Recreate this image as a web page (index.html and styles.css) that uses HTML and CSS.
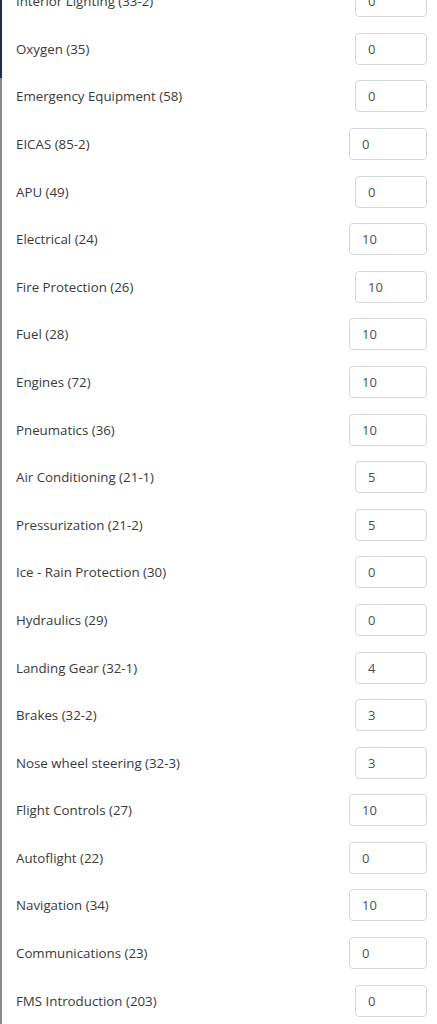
FILE: index.html
```html
<!DOCTYPE html>
<html>
<head>
<meta charset="utf-8">
<link rel="stylesheet" href="styles.css">
</head>
<body>
<div class="page">
  <div class="edge"><div class="edge-top"></div><div class="edge-rest"></div></div>
  <div class="list">
    <div class="row"><span class="label">Interior Lighting (33-2)</span><input class="num" value="0"></div>
    <div class="row"><span class="label">Oxygen (35)</span><input class="num" value="0"></div>
    <div class="row"><span class="label">Emergency Equipment (58)</span><input class="num" value="0"></div>
    <div class="row"><span class="label">EICAS (85-2)</span><input class="num wide" value="0"></div>
    <div class="row"><span class="label">APU (49)</span><input class="num" value="0"></div>
    <div class="row"><span class="label">Electrical (24)</span><input class="num wide" value="10"></div>
    <div class="row"><span class="label">Fire Protection (26)</span><input class="num" value="10"></div>
    <div class="row"><span class="label">Fuel (28)</span><input class="num wide" value="10"></div>
    <div class="row"><span class="label">Engines (72)</span><input class="num wide" value="10"></div>
    <div class="row"><span class="label">Pneumatics (36)</span><input class="num wide" value="10"></div>
    <div class="row"><span class="label">Air Conditioning (21-1)</span><input class="num" value="5"></div>
    <div class="row"><span class="label">Pressurization (21-2)</span><input class="num" value="5"></div>
    <div class="row"><span class="label">Ice - Rain Protection (30)</span><input class="num" value="0"></div>
    <div class="row"><span class="label">Hydraulics (29)</span><input class="num" value="0"></div>
    <div class="row"><span class="label">Landing Gear (32-1)</span><input class="num" value="4"></div>
    <div class="row"><span class="label">Brakes (32-2)</span><input class="num" value="3"></div>
    <div class="row"><span class="label">Nose wheel steering (32-3)</span><input class="num" value="3"></div>
    <div class="row"><span class="label">Flight Controls (27)</span><input class="num wide" value="10"></div>
    <div class="row"><span class="label">Autoflight (22)</span><input class="num wide" value="0"></div>
    <div class="row"><span class="label">Navigation (34)</span><input class="num wide" value="10"></div>
    <div class="row"><span class="label">Communications (23)</span><input class="num wide" value="0"></div>
    <div class="row"><span class="label">FMS Introduction (203)</span><input class="num" value="0"></div>
  </div>
</div>
</body>
</html>
```
FILE: styles.css
```css
html, body {
  margin: 0;
  padding: 0;
  background: #fff;
  height: 1024px;
  overflow: hidden;
}
.page {
  display: flex;
  height: 1024px;
  font-family: "Open Sans", "Noto Sans", sans-serif;
  font-size: 13.3px;
  color: #3a3a3a;
}
.edge {
  width: 2px;
  display: flex;
  flex-direction: column;
  flex-shrink: 0;
}
.edge-top {
  height: 78px;
  background: #1d2b57;
}
.edge-rest {
  flex: 1;
  background: #8a8a8a;
}
.list {
  flex: 1;
  margin-top: -22.6px;
  padding: 0 10px 0 14px;
}
.row {
  height: 47.6px;
  display: flex;
  align-items: center;
  justify-content: space-between;
}
.label {
  white-space: nowrap;
}
.num {
  box-sizing: border-box;
  width: 72px;
  height: 32px;
  padding: 0 12px;
  border: 1px solid #d4d8dd;
  border-radius: 4px;
  font-family: "Open Sans", "Noto Sans", sans-serif;
  font-size: 13px;
  color: #495057;
  background: #fff;
  outline: none;
}
.num.wide {
  width: 78px;
}
```
